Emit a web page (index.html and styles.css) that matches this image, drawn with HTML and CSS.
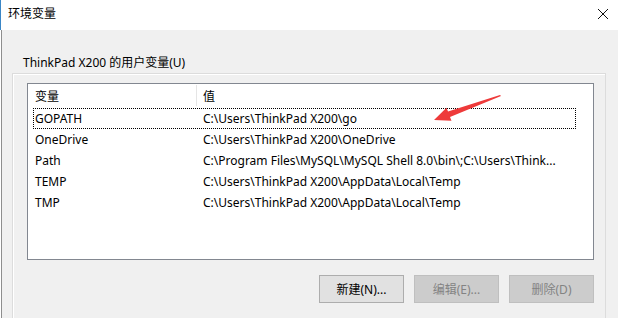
FILE: index.html
```html
<!DOCTYPE html>
<html lang="zh-CN">
<head>
    <meta charset="UTF-8">
    <title>环境变量</title>
    <link rel="stylesheet" href="styles.css">
</head>
<body>
    <div class="window">
        <!-- 标题栏 -->
        <div class="titlebar">
            <span class="title">环境变量</span>
            <svg class="close" width="12" height="12" viewBox="0 0 12 12">
                <path d="M1 1 L11 11 M11 1 L1 11" stroke="#111" stroke-width="1" fill="none"/>
            </svg>
        </div>

        <div class="content">
            <div class="group-label">ThinkPad X200 的用户变量(U)</div>
            <div class="group">
                <div class="group-inner">
                    <div class="listbox">
                        <div class="list-header">
                            <span class="cell name">变量</span>
                            <span class="divider"></span>
                            <span class="cell value">值</span>
                        </div>
                        <div class="row focused">
                            <span class="cell name">GOPATH</span>
                            <span class="cell value">C:\Users\ThinkPad X200\go</span>
                        </div>
                        <div class="row">
                            <span class="cell name">OneDrive</span>
                            <span class="cell value">C:\Users\ThinkPad X200\OneDrive</span>
                        </div>
                        <div class="row">
                            <span class="cell name">Path</span>
                            <span class="cell value">C:\Program Files\MySQL\MySQL Shell 8.0\bin\;C:\Users\Think...</span>
                        </div>
                        <div class="row">
                            <span class="cell name">TEMP</span>
                            <span class="cell value">C:\Users\ThinkPad X200\AppData\Local\Temp</span>
                        </div>
                        <div class="row">
                            <span class="cell name">TMP</span>
                            <span class="cell value">C:\Users\ThinkPad X200\AppData\Local\Temp</span>
                        </div>

                        <!-- 红色箭头标注 -->
                        <svg class="arrow" width="80" height="40" viewBox="0 0 80 40">
                            <polygon points="4,36 16.5,23.8 18,27.5 70,11 71,12 20,33.1 21.5,36.8" fill="#ee3a3a"/>
                        </svg>
                    </div>

                    <div class="buttons">
                        <button class="btn">新建(N)...</button>
                        <button class="btn" disabled>编辑(E)...</button>
                        <button class="btn" disabled>删除(D)</button>
                    </div>
                </div>
            </div>
        </div>
    </div>
</body>
</html>
```

FILE: styles.css
```css
* {
    margin: 0;
    padding: 0;
    box-sizing: border-box;
}

html, body {
    width: 100%;
    height: 100%;
    overflow: hidden;
    font-family: "Noto Sans", "Noto Sans CJK SC", sans-serif;
    font-size: 12px;
    color: #000000;
    background-color: #f0f0f0;
}

.window {
    display: flex;
    flex-direction: column;
    height: 100%;
}

/* 标题栏 */
.titlebar {
    height: 30px;
    background-color: #ffffff;
    border-left: 1px solid #3a86c6;
    display: flex;
    align-items: center;
    justify-content: space-between;
    padding: 0 9px 2px 7px;
    flex-shrink: 0;
}

.title {
    font-size: 12px;
    line-height: 16px;
}

.close {
    display: block;
}

/* 主体 */
.content {
    flex: 1;
    overflow: hidden;
    background-color: #f0f0f0;
    box-shadow: inset 1px 0 0 #ffffff, inset 2px 0 0 #8e8e8e;
    padding-top: 25px;
}

.group-label {
    line-height: 16px;
    padding-left: 23px;
}

.group {
    margin: 2px 0 0 12px;
    width: 594px;
    height: 250px;
    border: 1px solid #dcdcdc;
    border-bottom: none;
    box-shadow: inset 1px 1px 0 #ffffff;
}

.group-inner {
    width: 567px;
    margin: 9px 0 0 14px;
}

/* 列表 */
.listbox {
    position: relative;
    height: 177px;
    background-color: #ffffff;
    border: 1px solid #828790;
    padding-left: 5px;
}

.list-header {
    display: grid;
    grid-template-columns: 163px 1px 1fr;
    height: 24px;
    align-items: center;
}

.list-header .divider {
    align-self: stretch;
    background-color: #e5e5e5;
    margin: 1px 0 2px;
}

.list-header .name {
    padding-left: 2px;
}

.list-header .value {
    padding-left: 6px;
}

.row {
    display: grid;
    grid-template-columns: 170px 373px;
    width: 543px;
    height: 21px;
    align-items: center;
    line-height: 16px;
}

.row.focused {
    outline: 1px dotted #000000;
    outline-offset: -1px;
}

.cell {
    white-space: nowrap;
}

.row .name {
    padding-left: 2px;
}

.arrow {
    position: absolute;
    left: 402px;
    top: 0;
}

/* 按钮 */
.buttons {
    display: flex;
    justify-content: flex-end;
    gap: 10px;
    margin-top: 15px;
}

.btn {
    width: 85px;
    height: 28px;
    font-family: "Noto Sans", "Noto Sans CJK SC", sans-serif;
    font-size: 12px;
    color: #000000;
    background-color: #e1e1e1;
    border: 1px solid #adadad;
}

.btn:disabled {
    color: #838383;
    background-color: #cccccc;
    border-color: #bfbfbf;
}
```
